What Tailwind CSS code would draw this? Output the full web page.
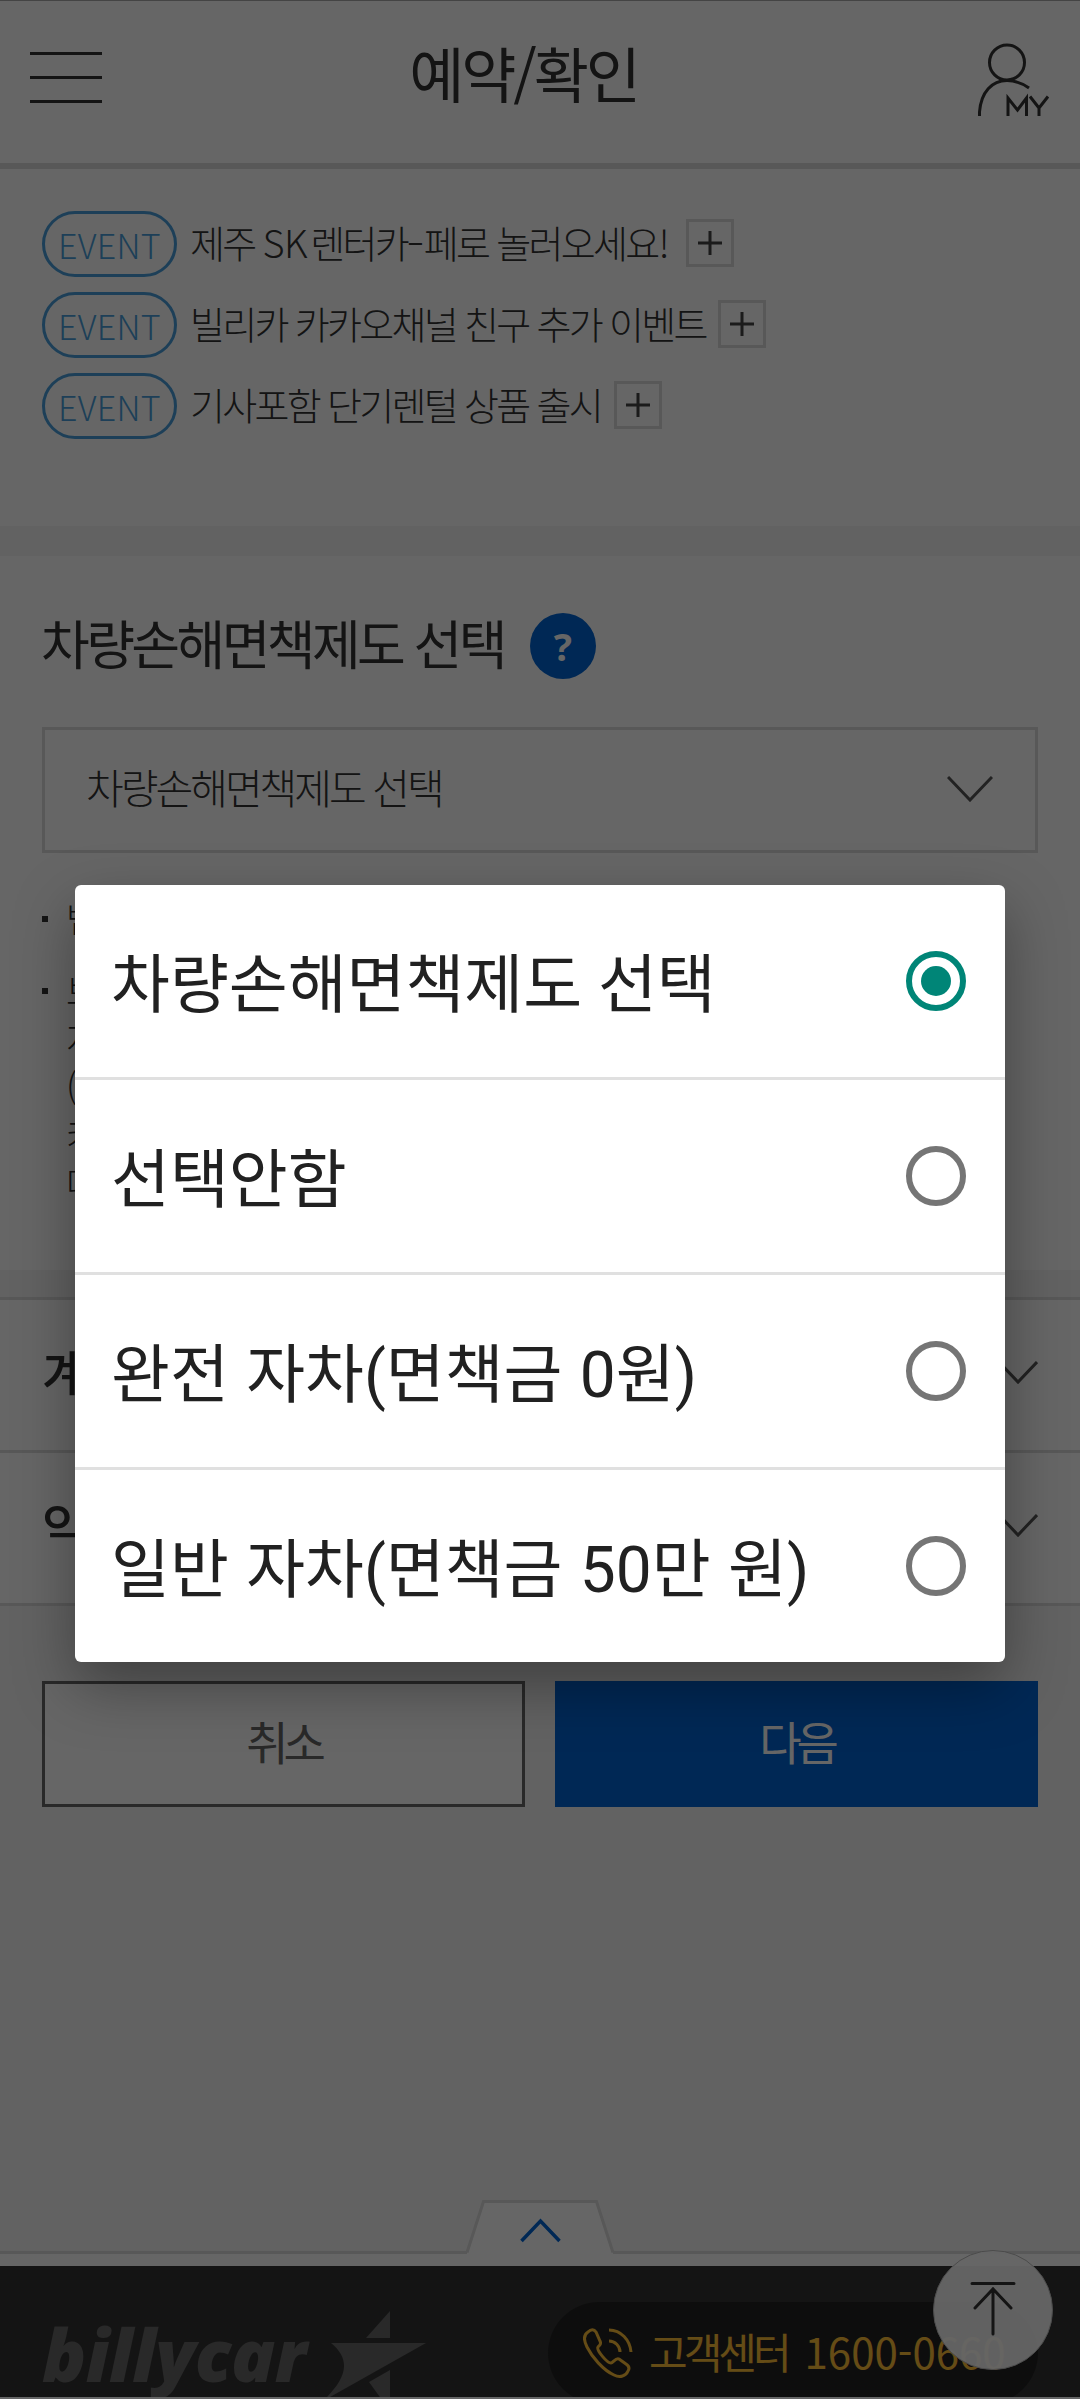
<!DOCTYPE html>
<html lang="ko">
<head>
<meta charset="utf-8">
<title>예약/확인</title>
<script src="https://cdn.jsdelivr.net/npm/@tailwindcss/browser@4"></script>
</head>
<body class="font-['Noto_Sans_CJK_KR',sans-serif]">
<div class="relative w-[1080px] h-[2399px] overflow-hidden bg-white text-[#333] flex flex-col">
  <header class="h-[169px] shrink-0 border-t border-t-[#aaa] border-b-[6px] border-b-[#dbdbdb] flex items-center justify-between pl-[30px] pr-[30px]">
    <div class="w-[72px] flex flex-col gap-[21px] -mt-[9px]"><i class="h-[3px] bg-[#333]"></i><i class="h-[3px] bg-[#333]"></i><i class="h-[3px] bg-[#333]"></i></div>
    <h1 class="text-[60px] leading-none tracking-[-3.200px] -mt-[20px] mr-[33px]">예약/확인</h1>
    <svg class="w-[72px] h-[76px] -mt-[4px]" viewBox="0 0 72 76" fill="none" stroke="#333" stroke-width="3"><circle cx="29" cy="20.500" r="17.500"/><path d="M1.500 74V70C3 50 14 38.500 29 38.500C38 38.500 44 41 51 46M30 74V56L39.500 68L48.500 56V74M52 54.500L61 66L70 54.500M61 65V74"/></svg>
  </header>

  <ul class="shrink-0 pt-[42px] pl-[42px] h-[357px] flex flex-col gap-[15px] text-[38px] font-light tracking-[-2.700px]">
    <li class="flex items-center h-[66px]"><b class="w-[135px] h-[66px] rounded-full border-[3px] border-[#4a9fdb] text-[#4a9fdb] font-light text-[34px] tracking-[0.300px] flex items-center justify-center mr-[13px]">EVENT</b><span class="-mt-[6px] w-[484px] whitespace-nowrap">제주 <span class="tracking-[-0.500px] pr-[3px]">SK</span>렌터카<span class="inline-block scale-x-140 tracking-[0px] px-[2px]">-</span>페로 놀러오세요<span class="pl-[1px]">!</span></span><i class="ml-[12px] -mt-[2px] size-[48px] border-[3px] border-[#dbdbdb] flex items-center justify-center"><svg class="size-[24px]" viewBox="0 0 24 24" stroke="#444" stroke-width="3"><path d="M0 12H24M12 0V24"/></svg></i></li>
    <li class="flex items-center h-[66px]"><b class="w-[135px] h-[66px] rounded-full border-[3px] border-[#4a9fdb] text-[#4a9fdb] font-light text-[34px] tracking-[0.300px] flex items-center justify-center mr-[13px]">EVENT</b><span class="-mt-[6px] whitespace-nowrap">빌리카 카카오채널 친구 추가 이벤트</span><i class="ml-[12px] -mt-[2px] size-[48px] border-[3px] border-[#dbdbdb] flex items-center justify-center"><svg class="size-[24px]" viewBox="0 0 24 24" stroke="#444" stroke-width="3"><path d="M0 12H24M12 0V24"/></svg></i></li>
    <li class="flex items-center h-[66px]"><b class="w-[135px] h-[66px] rounded-full border-[3px] border-[#4a9fdb] text-[#4a9fdb] font-light text-[34px] tracking-[0.300px] flex items-center justify-center mr-[13px]">EVENT</b><span class="-mt-[6px] whitespace-nowrap">기사포함 단기렌털 상품 출시</span><i class="ml-[13px] -mt-[2px] size-[48px] border-[3px] border-[#dbdbdb] flex items-center justify-center"><svg class="size-[24px]" viewBox="0 0 24 24" stroke="#444" stroke-width="3"><path d="M0 12H24M12 0V24"/></svg></i></li>
  </ul>

  <section class="shrink-0 h-[744px] border-t-[30px] border-t-[#f5f5f5] px-[42px] pt-[57px]">
    <div class="flex items-center h-[66px]">
      <h2 class="text-[53px] leading-none tracking-[-3.600px] -mt-[8px] -ml-[1px]">차량손해면책제도 선택</h2>
      <b class="ml-[26px] size-[66px] rounded-full bg-[#0064d4] text-white text-[38px] flex items-center justify-center font-bold font-['Noto_Sans']">?</b>
    </div>
    <div class="mt-[48px] h-[126px] border-[3px] border-[#dbdbdb] flex items-center justify-between pl-[41px] pr-[42px]">
      <span class="text-[41px] leading-none font-light tracking-[-3px] -mt-[8px]">차량손해면책제도 선택</span>
      <svg class="w-[46px] h-[26px] -mt-[3px]" viewBox="0 0 46 26" fill="none" stroke="#555" stroke-width="3"><path d="M1 1L23 24L45 1"/></svg>
    </div>
    <ul class="mt-[41px] text-[35px] leading-[48px] font-light text-[#333] w-[200px]">
      <li class="flex gap-[18px] mb-[24px]"><i class="mt-[22px] size-[6px] bg-[#333]"></i>법</li>
      <li class="flex gap-[18px]"><i class="mt-[22px] size-[6px] bg-[#333]"></i><span>보<br>지<br>(<br>카<br>다</span></li>
    </ul>
  </section>

  <section class="shrink-0 h-[336px] border-t-[27px] border-t-[#f5f5f5]">
    <div class="h-[156px] border-y-[3px] border-[#dbdbdb] pl-[42px] pr-[42px] flex items-center justify-between text-[51px] tracking-[-3px]"><span class="-mt-[7px] font-medium">계약</span><svg class="w-[40px] h-[24px] -mt-[5px]" viewBox="0 0 40 24" fill="none" stroke="#555" stroke-width="3"><path d="M1 1L20 21L39 1"/></svg></div>
    <div class="h-[153px] border-b-[3px] border-[#dbdbdb] pl-[42px] pr-[42px] flex items-center justify-between text-[51px] tracking-[-3px]"><span class="-mt-[7px] font-medium">약관</span><svg class="w-[40px] h-[24px] -mt-[5px]" viewBox="0 0 40 24" fill="none" stroke="#555" stroke-width="3"><path d="M1 1L20 21L39 1"/></svg></div>
  </section>

  <section class="shrink-0 h-[645px] bg-[#f5f5f5] px-[42px] pt-[75px] flex gap-[30px] text-[46px] tracking-[-5px]">
    <div class="w-[483px] h-[126px] bg-white border-[3px] border-[#666] text-[#666] flex items-center justify-center pb-[8px]">취소</div>
    <div class="w-[483px] h-[126px] bg-[#0064d4] text-white flex items-center justify-center pb-[8px]">다음</div>
  </section>

  <div class="shrink-0 h-[15px] relative border-t-[3px] border-[#dbdbdb]">
    <svg class="absolute left-[464px] -top-[54px] w-[152px] h-[56px]" viewBox="0 0 152 56" fill="#fff"><path d="M3 56V52L19.500 1.500H132.500L149 52V56Z"/><path d="M3 52.500L19.500 1.500H132.500L149 52.500" fill="none" stroke="#dbdbdb" stroke-width="3"/><path d="M57.500 41L76.500 21L95.500 41" fill="none" stroke="#0064d4" stroke-width="3.500"/></svg>
  </div>

  <footer class="shrink-0 h-[133px] bg-[#333] overflow-hidden pl-[42px] pr-[42px] pt-[36px] flex justify-between border-b-2 border-white">
    <div class="relative w-[390px] h-[110px] text-[#666]">
      <span class="absolute left-0 top-[15px] text-[73px] leading-none font-extrabold italic tracking-[-0.500px] font-['Open_Sans']">billycar</span>
      <svg class="absolute left-[281px] top-[9px] w-[104px] h-[100px]" viewBox="0 0 104 100" fill="#666"><path d="M43 27L67 0V27ZM8 32H103L0 90C22 69 30 50 8 32ZM67 59V100L46 71Z"/></svg>
    </div>
    <div class="w-[490px] h-[102px] shrink-0 rounded-full bg-[#222] text-[#fdbe38] flex items-center pl-[35px] text-[42px]">
      <svg class="w-[50px] h-[50px] -mt-[1px] mr-[16px] shrink-0" viewBox="0 0 50 50" fill="none" stroke="#fdbe38" stroke-width="3"><path d="M5 4C0 7 1 13 4 19C9 29 20 42 31 47C37 50 43 48 45 43C47 40 46 38 43 36L36 31C33 29 30 35 28 35C24 35 13 22 15 19C16 17 19 17 17 13L13 4C11 1 8 1 5 4ZM26 2C38 2 47 12 48 24M26 13C32 13 37 18 37 24"/></svg>
      <span class="tracking-[-4px] whitespace-nowrap -mt-[6px]">고객센터</span><span class="ml-[17px] whitespace-nowrap -mt-[6px]">1600-0660</span>
    </div>
  </footer>
  <div class="absolute left-[933px] top-[2250px] size-[120px] rounded-full bg-white/95 border border-[#bbb] flex items-center justify-center">
    <svg class="size-[60px]" viewBox="0 0 60 60" fill="none" stroke="#333" stroke-width="3" stroke-linecap="round"><path d="M9 3.500H51M30 10V54M12 28L30 9L48 28"/></svg>
  </div>

  <div class="absolute inset-0 bg-black/60"></div>
  <div class="absolute left-[75px] top-[885px] w-[930px] h-[777px] rounded-[6px] bg-white shadow-[0_24px_60px_rgba(0,0,0,0.35)] divide-y-[3px] divide-[#e0e0e0] text-[#212121] text-[64px] font-['Roboto','Noto_Sans_CJK_KR',sans-serif] flex flex-col">
    <div class="h-[195px] flex items-center justify-between pl-[36px] pr-[39px]"><span class="mt-[9px]">차량손해면책제도 선택</span><i class="size-[60px] rounded-full border-[6px] border-[#008577] flex items-center justify-center"><i class="size-[30px] rounded-full bg-[#008577]"></i></i></div>
    <div class="h-[195px] flex items-center justify-between pl-[36px] pr-[39px]"><span class="mt-[9px]">선택안함</span><i class="size-[60px] rounded-full border-[6px] border-[#757575]"></i></div>
    <div class="h-[195px] flex items-center justify-between pl-[36px] pr-[39px]"><span class="mt-[9px] [word-spacing:1.500px]">완전 자차(면책금 0원)</span><i class="size-[60px] rounded-full border-[6px] border-[#757575]"></i></div>
    <div class="h-[192px] flex items-center justify-between pl-[36px] pr-[39px]"><span class="mt-[9px] [word-spacing:1.500px]">일반 자차(면책금 50만 원)</span><i class="size-[60px] rounded-full border-[6px] border-[#757575]"></i></div>
  </div>
</div>
</body>
</html>
